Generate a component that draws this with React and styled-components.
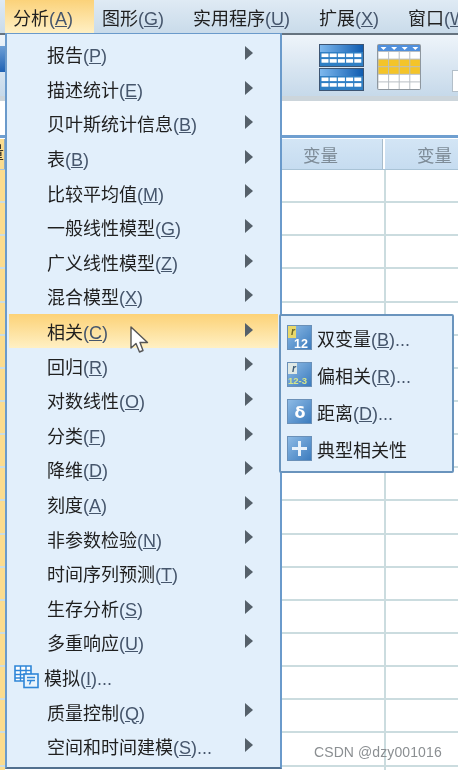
import React from 'react';
import styled, { createGlobalStyle } from 'styled-components';

const FONT = '"Liberation Sans", "Noto Sans CJK SC", sans-serif';

const GlobalStyle = createGlobalStyle`
  html, body { margin: 0; padding: 0; background: #fff; }
  body { font-family: ${FONT}; overflow: hidden; }
`;

const Page = styled.div`
  position: relative;
  width: 458px;
  height: 770px;
  overflow: hidden;
  background: #fff;
  filter: blur(0.55px);
`;

/* ---------- menu bar ---------- */
const MenuBar = styled.div`
  display: flex;
  height: 33px;
  padding-left: 5px;
  background: linear-gradient(#dfeaf4, #c9dbea);
  border-bottom: 2px solid #66737f;
  box-sizing: content-box;
`;

const BarItem = styled.div`
  display: flex;
  align-items: center;
  padding: 0 21px 0 8px;
  font-size: 18px;
  white-space: nowrap;
  color: #1f1f1f;
  background: ${p => (p.$active ? 'linear-gradient(#fbd27a, #fff0c4)' : 'none')};
`;

const Mnemonic = styled.span`
  color: #46566c;
`;

/* ---------- background window ---------- */
const Toolbar = styled.div`
  display: flex;
  gap: 13px;
  height: 61px;
  padding-top: 9px;
  box-sizing: border-box;
  background: linear-gradient(#eef4fa, #c6d9ea);
  svg { flex: none; }
`;

const ToolSliver = styled.div`
  flex: none;
  width: 5px;
  height: 26px;
  margin: 2px 301px 0 0;
  background: linear-gradient(#6d9fd6, #1f62b4);
`;

const ToolBox = styled.div`
  width: 12px;
  height: 20px;
  margin: 26px 0 0 17px;
  flex: none;
  background: #fff;
  border: 1px solid #b3bfc9;
`;

const Separator = styled.div`
  height: 5px;
  background: #ccd5db;
`;

const CellBar = styled.div`
  height: 34px;
  background: #fff;
  border-bottom: 3px solid #6f9fd0;
`;

const GridHead = styled.div`
  display: grid;
  grid-template-columns: 5px 376px 100px;
  gap: 0 2px;
  height: 30px;
  margin-top: 1px;
  border-bottom: 1px solid #a9c3d6;
  box-sizing: content-box;
`;

const HeadCorner = styled.div`
  background: #fbdc8e;
  border-right: 1px solid #8fa9bd;
  font-size: 17px;
  line-height: 30px;
  color: #3a3428;
  overflow: hidden;
  direction: rtl;
`;

const HeadCell = styled.div`
  display: flex;
  align-items: center;
  justify-content: center;
  padding-left: ${p => p.$inset || 0}px;
  font-size: 17.5px;
  color: #7e8c98;
  background: linear-gradient(#d3e5f5, #c6dcf0);
  border-right: 1px solid #a8bccb;
`;

const GridRow = styled.div`
  display: grid;
  grid-template-columns: 5px 381px 1fr;
  height: 33.15px;
  box-sizing: border-box;
  border-bottom: 2px solid #cbdcdf;
`;

const RowHead = styled.div`
  background: #fbdc8e;
`;

const Cell = styled.div`
  border-right: 2px solid #cbdcdf;
  &:last-child { border-right: none; }
`;

/* ---------- dropdown ---------- */
const Menu = styled.div`
  position: absolute;
  left: 5px;
  top: 33px;
  width: 277px;
  height: 736px;
  box-sizing: border-box;
  padding: 3px 2px 0;
  background: #e2effb;
  border: 2px solid #6a9acb;
  border-top-width: 1px;
  border-bottom-color: #52708f;
`;

const Item = styled.div`
  position: relative;
  display: flex;
  align-items: center;
  height: 34.6px;
  padding-left: ${p => (p.$icon ? '5px' : '38px')};
  font-size: 18px;
  white-space: nowrap;
  color: #1f1f1f;
  background: ${p => (p.$active ? 'linear-gradient(#fcd277, #fff0c4)' : 'none')};
`;

const Arrow = styled.span`
  position: absolute;
  left: 236px;
  top: 9px;
  width: 0;
  height: 0;
  border-left: 8px solid #55606a;
  border-top: 7px solid transparent;
  border-bottom: 7px solid transparent;
`;

const IconSlot = styled.span`
  display: flex;
  width: 25px;
  height: 25px;
  margin-right: 5px;
`;

const Pointer = styled.svg`
  position: absolute;
  left: 129px;
  top: 325px;
`;

/* ---------- submenu ---------- */
const SubMenu = styled.div`
  position: absolute;
  left: 279px;
  top: 314px;
  width: 175px;
  height: 159px;
  box-sizing: border-box;
  padding: 3px 0 0 6px;
  display: flex;
  flex-direction: column;
  background: #e2effb;
  border: 2px solid #6a94bd;
  border-radius: 2px;
`;

const SubItem = styled.div`
  display: flex;
  align-items: center;
  gap: 5px;
  height: 37px;
  font-size: 18px;
  white-space: nowrap;
  color: #1f1f1f;
`;

const Watermark = styled.div`
  position: absolute;
  left: 314px;
  top: 744px;
  font-size: 14px;
  letter-spacing: 0.1px;
  color: #8b8f92;
`;

/* ---------- icons ---------- */
function TableIcon({ y }) {
  const cells = [];
  for (let r = 0; r < 2; r++) {
    for (let c = 0; c < 5; c++) {
      cells.push(<rect key={`${r}-${c}`} x={2.5 + c * 8.2} y={y + 9.5 + r * 5.6} width={7} height={3.6} fill="#fff" />);
    }
  }
  return (
    <g>
      <rect x="0.5" y={y + 0.5} width="44" height="22" fill="#2f7fc4" stroke="#3d5573" />
      <rect x="1" y={y + 1} width="43" height="7" fill="url(#headBlue)" />
      {cells}
    </g>
  );
}

const DoubleTable = () => (
  <svg width="45" height="47" viewBox="0 0 45 47">
    <defs>
      <linearGradient id="headBlue" x1="0" x2="1" y1="0" y2="0">
        <stop offset="0" stopColor="#7db8ee" />
        <stop offset="1" stopColor="#0f5cb0" />
      </linearGradient>
    </defs>
    <TableIcon y={0} />
    <TableIcon y={24} />
  </svg>
);

const YellowTable = () => {
  const cells = [];
  for (let r = 0; r < 5; r++) {
    for (let c = 0; c < 4; c++) {
      const fill = r === 1 || r === 2 ? '#f4c429' : '#fff';
      cells.push(<rect key={`${r}-${c}`} x={1.5 + c * 10.6} y={8 + r * 7.6} width={9.6} height={6.6} fill={fill} />);
    }
  }
  return (
    <svg width="45" height="46" viewBox="0 0 45 46">
      <rect x="0.5" y="0.5" width="43" height="45" rx="1" fill="#b9bfc4" stroke="#8e979f" />
      <rect x="1" y="1" width="42" height="6" fill="#4f8fdc" />
      {[0, 1, 2, 3].map(i => (
        <path key={i} d={`M${3.5 + i * 10.6} 3 h6 l-3 3 z`} fill="#fff" />
      ))}
      {cells}
    </svg>
  );
};

const SimIcon = () => (
  <svg width="25" height="25" viewBox="0 0 25 25" fill="none">
    <path d="M1 2h16v15H1z" fill="#fff" stroke="#2f86d8" strokeWidth="1.6" />
    <path d="M1 6.500h16M1 10.500h16M1 14h10M6.500 2v15M12 2v9" stroke="#2f86d8" strokeWidth="1.4" />
    <rect x="10" y="10" width="14" height="13.500" fill="#e8f3fc" stroke="#2f86d8" strokeWidth="1.6" />
    <path d="M13 13.500h8M13 16.500h8M17 16.500l-1.500 4" stroke="#2f86d8" strokeWidth="1.4" />
  </svg>
);

const BlueTile = ({ id, children }) => (
  <svg width="25" height="25" viewBox="0 0 25 25">
    <defs>
      <linearGradient id={id} x1="0" x2="1" y1="0" y2="1">
        <stop offset="0" stopColor="#8fbce6" />
        <stop offset="1" stopColor="#3a7abd" />
      </linearGradient>
    </defs>
    <rect x="0.5" y="0.5" width="24" height="24" fill={`url(#${id})`} stroke="#6a90b8" />
    {children}
  </svg>
);

const PearsonIcon = () => (
  <BlueTile id="tileA">
    <rect x="1" y="1" width="8" height="12" fill="#e9d86a" />
    <text x="4" y="10" fontSize="10" fontStyle="italic" fontWeight="700" fill="#6b6628" fontFamily={FONT}>r</text>
    <text x="7" y="22.500" fontSize="12.500" fontWeight="700" fill="#fff" fontFamily={FONT}>12</text>
  </BlueTile>
);

const PartialIcon = () => (
  <BlueTile id="tileB">
    <rect x="1" y="1" width="9" height="11" fill="#dfe9e6" />
    <text x="5" y="10" fontSize="10" fontStyle="italic" fontWeight="700" fill="#3c5a75" fontFamily={FONT}>r</text>
    <text x="1" y="22" fontSize="9.500" fontWeight="700" fill="#d6e68a" fontFamily={FONT}>12-3</text>
  </BlueTile>
);

const DistanceIcon = () => (
  <BlueTile id="tileC">
    <text x="7.500" y="19" fontSize="16" fontWeight="700" fill="#fff" fontFamily="DejaVu Sans, sans-serif">δ</text>
  </BlueTile>
);

const CanonicalIcon = () => (
  <BlueTile id="tileD">
    <path d="M12.500 5v15M5 12.500h15" stroke="#e8f2fb" strokeWidth="3" />
  </BlueTile>
);

/* ---------- data ---------- */
const menuItems = [
  { name: '报告', key: 'P', sub: true },
  { name: '描述统计', key: 'E', sub: true },
  { name: '贝叶斯统计信息', key: 'B', sub: true },
  { name: '表', key: 'B', sub: true },
  { name: '比较平均值', key: 'M', sub: true },
  { name: '一般线性模型', key: 'G', sub: true },
  { name: '广义线性模型', key: 'Z', sub: true },
  { name: '混合模型', key: 'X', sub: true },
  { name: '相关', key: 'C', sub: true, active: true },
  { name: '回归', key: 'R', sub: true },
  { name: '对数线性', key: 'O', sub: true },
  { name: '分类', key: 'F', sub: true },
  { name: '降维', key: 'D', sub: true },
  { name: '刻度', key: 'A', sub: true },
  { name: '非参数检验', key: 'N', sub: true },
  { name: '时间序列预测', key: 'T', sub: true },
  { name: '生存分析', key: 'S', sub: true },
  { name: '多重响应', key: 'U', sub: true },
  { name: '模拟', key: 'I', dots: true, icon: true },
  { name: '质量控制', key: 'Q', sub: true },
  { name: '空间和时间建模', key: 'S', dots: true, sub: true },
];

const barItems = [
  { name: '分析', key: 'A', active: true },
  { name: '图形', key: 'G' },
  { name: '实用程序', key: 'U' },
  { name: '扩展', key: 'X' },
  { name: '窗口', key: 'W' },
];

const subItems = [
  { name: '双变量', key: 'B', dots: true, Icon: PearsonIcon },
  { name: '偏相关', key: 'R', dots: true, Icon: PartialIcon },
  { name: '距离', key: 'D', dots: true, Icon: DistanceIcon },
  { name: '典型相关性', Icon: CanonicalIcon },
];

function Label({ name, hotkey, dots }) {
  return (
    <span>
      {name}
      {hotkey && <Mnemonic>(<u>{hotkey}</u>){dots ? '...' : ''}</Mnemonic>}
    </span>
  );
}

export default function App() {
  return (
    <Page>
      <GlobalStyle />
      <MenuBar>
        {barItems.map(b => (
          <BarItem key={b.name} $active={b.active}>
            <Label name={b.name} hotkey={b.key} />
          </BarItem>
        ))}
      </MenuBar>
      <Toolbar>
        <ToolSliver />
        <DoubleTable />
        <YellowTable />
        <ToolBox />
      </Toolbar>
      <Separator />
      <CellBar />
      <GridHead>
        <HeadCorner>量</HeadCorner>
        <HeadCell $inset={252}>变量</HeadCell>
        <HeadCell>变量</HeadCell>
      </GridHead>
      {Array.from({ length: 19 }).map((_, i) => (
        <GridRow key={i}>
          <RowHead />
          <Cell />
          <Cell />
        </GridRow>
      ))}

      <Menu>
        {menuItems.map(m => (
          <Item key={m.name} $active={m.active} $icon={m.icon}>
            {m.icon && <IconSlot><SimIcon /></IconSlot>}
            <Label name={m.name} hotkey={m.key} dots={m.dots} />
            {m.sub && <Arrow />}
          </Item>
        ))}
      </Menu>

      <SubMenu>
        {subItems.map(({ name, key, dots, Icon }) => (
          <SubItem key={name}>
            <Icon />
            <Label name={name} hotkey={key} dots={dots} />
          </SubItem>
        ))}
      </SubMenu>

      <Pointer width="20" height="30" viewBox="0 0 20 30">
        <path d="M2 2 L2 23 L7 18.500 L10.500 27 L14 25.500 L11 17.500 L18.500 17.500 Z" fill="#fff" stroke="#555" strokeWidth="1.4" strokeLinejoin="round" />
      </Pointer>

      <Watermark>CSDN @dzy001016</Watermark>
    </Page>
  );
}
